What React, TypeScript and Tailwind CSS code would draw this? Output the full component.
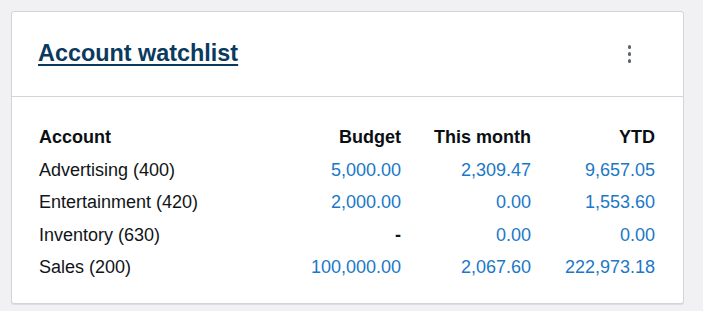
const rows = [
  { account: 'Advertising (400)', budget: '5,000.00', month: '2,309.47', ytd: '9,657.05' },
  { account: 'Entertainment (420)', budget: '2,000.00', month: '0.00', ytd: '1,553.60' },
  { account: 'Inventory (630)', budget: null, month: '0.00', ytd: '0.00' },
  { account: 'Sales (200)', budget: '100,000.00', month: '2,067.60', ytd: '222,973.18' },
];

export default function App() {
  return (
    <div className="min-h-[311px] w-[703px] bg-[#f1f1f3] pt-[11px] pl-[11px] font-['Liberation_Sans',Arial,sans-serif]">
      <div className="w-[673px] rounded-[3px] border border-[#d3d4d8] bg-white shadow-[0_1px_0_#dcdde0]">
        <div className="flex h-[85px] items-center justify-between border-b border-[#d3d4d8] pl-[26px] pr-[48px]">
          <a href="#" className="text-[23.4px] font-bold leading-none text-[#0a3a5e] underline underline-offset-[3px]">
            Account watchlist
          </a>
          <button className="flex flex-col items-center gap-[3.5px] p-1" aria-label="More options">
            <span className="h-[3.5px] w-[3.5px] rounded-full bg-[#5b6370]" />
            <span className="h-[3.5px] w-[3.5px] rounded-full bg-[#5b6370]" />
            <span className="h-[3.5px] w-[3.5px] rounded-full bg-[#5b6370]" />
          </button>
        </div>
        <div className="pt-[24px] pb-[19px] pl-[27px] pr-[28px] text-[18px]">
          <div className="grid h-[33px] grid-cols-[1fr_130px_130px_124px] font-bold leading-[32px] text-[#0b0f14]">
            <span>Account</span>
            <span className="text-right">Budget</span>
            <span className="text-right">This month</span>
            <span className="text-right">YTD</span>
          </div>
          {rows.map((r) => (
            <div key={r.account} className="grid h-[32.4px] grid-cols-[1fr_130px_130px_124px] leading-[32px]">
              <span className="text-[#111418]">{r.account}</span>
              {r.budget ? (
                <span className="text-right text-[#1b78c6]">{r.budget}</span>
              ) : (
                <span className="text-right font-bold text-[#111418]">-</span>
              )}
              <span className="text-right text-[#1b78c6]">{r.month}</span>
              <span className="text-right text-[#1b78c6]">{r.ytd}</span>
            </div>
          ))}
        </div>
      </div>
    </div>
  );
}
